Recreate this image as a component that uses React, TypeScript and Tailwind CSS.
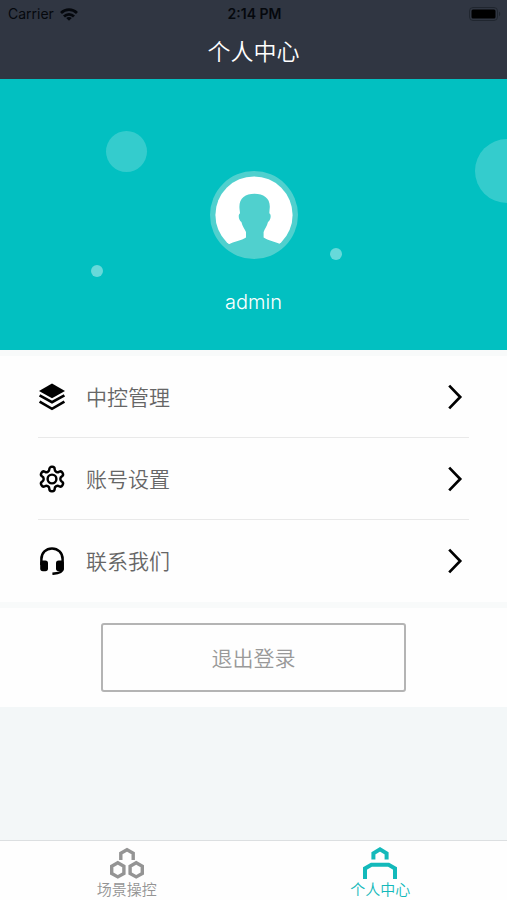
import { useState } from "react";
import type { ReactNode } from "react";

type MenuItem = {
  id: string;
  label: string;
  icon: ReactNode;
};

type Tab = {
  id: string;
  label: string;
  icon: ReactNode;
};

function WifiIcon() {
  return (
    <svg viewBox="0 0 18 13" className="h-[13px] w-[18px]" aria-hidden="true">
      <g fill="none" stroke="#05080d" strokeWidth="2.8">
        <path d="M1 5C5.6 0.6 12.4 0.6 17 5" />
        <path d="M4 8.4C6.8 5.6 11.2 5.6 14 8.4" />
      </g>
      <path d="M6.2 9.9C7.8 8.6 10.2 8.6 11.8 9.9L9 12.8Z" fill="#05080d" />
    </svg>
  );
}

function BatteryIcon() {
  return (
    <svg viewBox="0 0 32 14" className="h-[14px] w-8" aria-hidden="true">
      <rect x="0.5" y="0.5" width="28" height="13" rx="3.5" fill="none" stroke="#20262f" />
      <rect x="2.5" y="2.5" width="24" height="9" rx="1.5" fill="#000" />
      <path d="M30 4.8C31.6 5.4 31.6 8.6 30 9.2Z" fill="#20262f" />
    </svg>
  );
}

function LayersIcon() {
  return (
    <svg viewBox="0 0 28 28" className="size-7" aria-hidden="true">
      <path d="M14 0.6L27 8L14 15.2L1 8Z" fill="#000" />
      <g fill="none" stroke="#000" strokeWidth="2.7">
        <path d="M1.6 12.4L14 19.2L26.4 12.4" />
        <path d="M1.6 18.6L14 25.8L26.4 18.6" />
      </g>
    </svg>
  );
}

function GearIcon() {
  return (
    <svg viewBox="0.5 0.5 23 23" className="size-7" fill="none" stroke="#000" strokeWidth="2" aria-hidden="true">
      <path d="M12.22 2h-.44a2 2 0 0 0-2 2v.18a2 2 0 0 1-1 1.73l-.43.25a2 2 0 0 1-2 0l-.15-.08a2 2 0 0 0-2.73.73l-.22.38a2 2 0 0 0 .73 2.73l.15.1a2 2 0 0 1 1 1.72v.51a2 2 0 0 1-1 1.74l-.15.09a2 2 0 0 0-.73 2.73l.22.38a2 2 0 0 0 2.73.73l.15-.08a2 2 0 0 1 2 0l.43.25a2 2 0 0 1 1 1.73V20a2 2 0 0 0 2 2h.44a2 2 0 0 0 2-2v-.18a2 2 0 0 1 1-1.73l.43-.25a2 2 0 0 1 2 0l.15.08a2 2 0 0 0 2.73-.73l.22-.39a2 2 0 0 0-.73-2.73l-.15-.08a2 2 0 0 1-1-1.74v-.5a2 2 0 0 1 1-1.74l.15-.09a2 2 0 0 0 .73-2.73l-.22-.38a2 2 0 0 0-2.73-.73l-.15.08a2 2 0 0 1-2 0l-.43-.25a2 2 0 0 1-1-1.73V4a2 2 0 0 0-2-2z" />
      <circle cx="12" cy="12" r="3.6" />
    </svg>
  );
}

function HeadsetIcon() {
  return (
    <svg viewBox="0 0 28 28" className="size-7" aria-hidden="true">
      <path
        d="M3.4 18V12C3.4 5.8 8 1.4 14 1.4S24.6 5.8 24.6 12V22C24.6 25.2 21 26.4 14.4 26.8"
        fill="none"
        stroke="#000"
        strokeWidth="2.5"
      />
      <rect x="2.2" y="13.4" width="7.8" height="10.8" rx="2.6" fill="#000" />
      <rect x="18" y="13.4" width="7.8" height="10.8" rx="2.6" fill="#000" />
    </svg>
  );
}

function Chevron() {
  return (
    <svg viewBox="0 0 16 28" className="h-7 w-4" fill="none" stroke="#000" strokeWidth="2.7" aria-hidden="true">
      <path d="M2.2 2.6L13.2 14L2.2 25.4" />
    </svg>
  );
}

function SceneIcon() {
  return (
    <svg viewBox="0 0 36 32" className="h-8 w-9" fill="none" stroke="currentColor" strokeWidth="3.4" aria-hidden="true">
      <path d="M11.8 13V6.2L18 2.8L24.2 6.2V13" />
      <path d="M8.8 15.8L14.9 19.3V26.4L8.8 29.9L2.7 26.4V19.3Z" />
      <path d="M27.2 15.8L33.3 19.3V26.4L27.2 29.9L21.1 26.4V19.3Z" />
    </svg>
  );
}

function PersonIcon() {
  return (
    <svg viewBox="0 0 36 32" className="h-8 w-9" fill="none" stroke="currentColor" strokeWidth="4" aria-hidden="true">
      <path d="M11.4 12.4V6.4L18 2.4L24.6 6.4V12.4" />
      <path d="M3 32V21.4L9.4 17.8H26.6L33 21.4V32" />
    </svg>
  );
}

function Avatar() {
  return (
    <svg viewBox="0 0 88 88" className="size-[88px]" role="img" aria-label="admin">
      <circle cx="44" cy="44" r="44" fill="#50d0ce" />
      <circle cx="44" cy="44" r="38.6" fill="#fff" />
      <path
        d="M44.5 22.8C53.5 22.8 60 27 59.8 36C59.7 38.5 59.2 40.5 59.4 42.6C61.6 43.2 60.8 49.6 58 51C57 55.5 54.6 58 53.6 61V66.4C58 69.6 65 70.4 70.4 73.2C66 80 55 86 44 86S22 80 18.4 73.4C24 70.4 31.6 69.6 36 66.4V61C34.6 58 32.4 55.5 31.4 51C28.6 49.6 27.8 43.2 30 42.6C30 40.5 29.4 38.5 29.4 36C29.4 27 35.5 22.8 44.5 22.8Z"
        fill="#50d0ce"
      />
    </svg>
  );
}

const menu: MenuItem[] = [
  { id: "control", label: "中控管理", icon: <LayersIcon /> },
  { id: "account", label: "账号设置", icon: <GearIcon /> },
  { id: "contact", label: "联系我们", icon: <HeadsetIcon /> },
];

const tabs: Tab[] = [
  { id: "scene", label: "场景操控", icon: <SceneIcon /> },
  { id: "profile", label: "个人中心", icon: <PersonIcon /> },
];

export default function App() {
  const [active, setActive] = useState("profile");

  return (
    <div className="flex min-h-screen flex-col bg-[#f3f7f8] font-['Noto_Sans_CJK_SC',sans-serif] font-[350]">
      <header className="bg-[#303642] pb-1.5">
        <div className="grid h-7 grid-cols-3 items-center pr-1.5 pl-2 font-['Inter',sans-serif] text-sm font-normal text-[#05080d]">
          <span className="flex items-center gap-1.5">
            Carrier
            <WifiIcon />
          </span>
          <span className="text-center font-semibold">2:14 PM</span>
          <span className="flex justify-end">
            <BatteryIcon />
          </span>
        </div>
        <h1 className="text-center text-[23px] leading-[45px] font-[350] text-white">个人中心</h1>
      </header>

      <section className="relative flex h-[271px] flex-col items-center overflow-hidden bg-[#02c0c1] pt-[92px]">
        {/* bubbles */}
        <span className="absolute top-[52px] left-[21%] size-[41px] rounded-full bg-white/20" />
        <span className="absolute top-[60px] -right-8 size-16 rounded-full bg-white/20" />
        <span className="absolute top-[186px] left-[18%] size-3 rounded-full bg-white/40" />
        <span className="absolute top-[169px] left-[65%] size-3 rounded-full bg-white/40" />
        <Avatar />
        <p className="mt-[27px] font-['Inter',sans-serif] text-xl leading-8 font-light text-white">admin</p>
      </section>

      <nav className="border-t-[6px] border-[#f8fafa] bg-[#fefefe] px-[38px] pb-px">
        <ul className="divide-y divide-[#e9e9e9]">
          {menu.map((item) => (
            <li key={item.id}>
              <button type="button" className="flex h-[81px] w-full items-center text-[21px] text-[#666]">
                {item.icon}
                <span className="ml-5">{item.label}</span>
                <span className="mr-1.5 ml-auto">
                  <Chevron />
                </span>
              </button>
            </li>
          ))}
        </ul>
      </nav>

      <div className="border-t-[6px] border-[#f8fafa] bg-[#fefefe] px-[20%] py-[15px]">
        <button
          type="button"
          className="h-[69px] w-full rounded-[3px] border-2 border-[#b4b4b4] text-[21px] text-[#999]"
        >
          退出登录
        </button>
      </div>

      <footer className="mt-auto grid h-[60px] grid-cols-2 border-t border-[#dcdfe1] bg-[#fefefe]">
        {tabs.map((tab) => (
          <button
            key={tab.id}
            type="button"
            onClick={() => setActive(tab.id)}
            aria-pressed={tab.id === active}
            className={`flex flex-col items-center pt-1.5 text-[15px] leading-5 ${
              tab.id === active ? "text-[#13b9ba]" : "text-[#949494]"
            }`}
          >
            {tab.icon}
            {tab.label}
          </button>
        ))}
      </footer>
    </div>
  );
}
